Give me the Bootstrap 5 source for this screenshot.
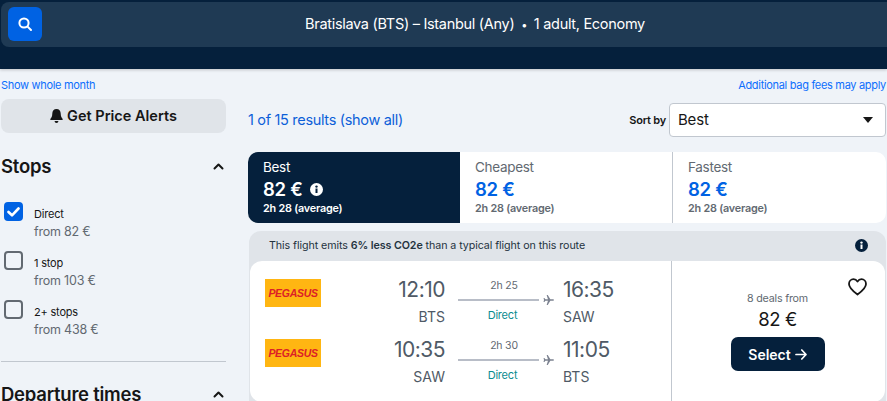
<!DOCTYPE html>
<html lang="en">
<head>
<meta charset="utf-8">
<title>Flights</title>
<link href="https://cdn.jsdelivr.net/npm/bootstrap@5.3.0/dist/css/bootstrap.min.css" rel="stylesheet">
<style>
html,body{height:401px;overflow:hidden}
body{background:#eff3f8;font-family:Inter,"Noto Sans",sans-serif;color:#161616;letter-spacing:-.2px}
.top-band{background:#05203c;height:69px;padding:2px 0 0 1px;box-shadow:0 1px 3px rgba(0,0,0,.2)}
.sum-bar{background:#1f3a54;height:45px;border-radius:8px 0 0 8px;padding:5px 7px;color:#fff;font-size:14.5px;position:relative}
.sum-text{flex:1;text-align:center;margin-top:-1px;padding-left:28px;letter-spacing:-.3px}
.sum-text i{font-style:normal;margin:0 3px;font-size:11px}
.srch{width:34px;height:34px;background:#0062e3;border-radius:6px}
.tiny-links{height:30px;font-size:11px;padding:2px 1px 0;align-items:center;letter-spacing:-.31px}
.tiny-links a{color:#0d6efd;text-decoration:none}
.page-flex{display:flex;padding:0 1px}
.side{width:225px;flex:none}
.main-col{margin-left:22px;flex:1;min-width:0}
.alert-btn{background:#e0e4e9;height:34px;border-radius:8px;font-size:14.5px;font-weight:600;color:#161616;width:100%;border:0}
.f-head{font-size:18.5px;font-weight:600;line-height:24px;letter-spacing:-.25px}
.head-first{margin-top:21px}
.head-next{margin-top:20px}
.chev{margin-right:2px}
.stops-list{margin-top:24px}
.stop-row{display:flex;height:49px}
.cb-box{width:19px;height:19px;border:2px solid #626971;border-radius:4px;margin:0 11px 0 3px;flex:none;display:flex;align-items:center;justify-content:center}
.cb-box.on{background:#0062e3;border-color:#0062e3}
.stop-a{font-size:11px;line-height:14px;margin-top:5px}
.stop-b{font-size:12.5px;color:#626971;line-height:20px;margin-top:1px}
.divline{border-top:1px solid #c1c7cf;margin-top:12px}
.res-count{color:#0d5fd8;font-size:14.5px;letter-spacing:-.32px}
.sort-lab{font-size:11px;font-weight:600;margin-right:3px}
.sort-box{width:217px;height:34px;background:#fff;border:1px solid #c1c7cf;border-radius:4px;padding:0 8px;font-size:15px}
.caret-dn{width:0;height:0;border-left:5px solid transparent;border-right:5px solid transparent;border-top:6px solid #161616;margin-right:4px}
.tabs-row{display:flex;height:71px;margin-top:15px;background:#fff;border-radius:10px;overflow:hidden}
.tab-cell{width:212px;padding:7px 15px;color:#626971;line-height:1}
.tab-cell+.tab-cell+.tab-cell{border-left:1px solid #c1c7cf;flex:1}
.tab-cell.sel{background:#05203c;color:#fff}
.t-name{font-size:13.5px;line-height:17px;letter-spacing:-.3px}
.t-price{font-size:18.5px;font-weight:600;color:#0062e3;line-height:24px;margin-top:1px;letter-spacing:-.3px}
.sel .t-price{color:#fff}
.t-sub{font-size:10.8px;font-weight:600;line-height:14px;margin-top:1px}
.result{margin:8px 0 0 1px;background:#e0e4e9;border-radius:12px 12px 0 0;padding-top:30px;position:relative}
.eco-line{position:absolute;left:20px;top:8px;font-size:10.7px;line-height:14px;color:#24333f;letter-spacing:-.08px}
.eco-i{position:absolute;right:18px;top:8px}
.flight-card{background:#fff;border-radius:12px;margin:0 1px;display:flex;height:141px}
.legs{width:422px;border-right:1px solid #c1c7cf;padding:17px 0 0 15px}
.leg{display:flex;height:60px}
.air-logo{width:56px;height:28px;margin-top:1px;background:#ffb612;color:#dc2027;font:italic 700 10.5px/28px "Liberation Sans",sans-serif;text-align:center;letter-spacing:-.3px;flex:none}
.tm{width:124px;text-align:right;color:#4f5a66;flex:none}
.tm2{width:70px;text-align:left;color:#4f5a66;flex:none}
.clock{font-size:21px;line-height:24px;letter-spacing:-.5px}
.ap{font-size:14px;line-height:20px;margin-top:5px;letter-spacing:0}
.mid-sec{width:96px;margin:1px 9px 0 13px;font-size:10.5px;line-height:14px;flex:none;color:#626971}
.mid-lab{width:92px;text-align:center}
.mid-line{display:flex;align-items:center;height:12px;margin:1px 0 2px}
.mid-line b{display:block;width:81px;height:2px;background:#b8bdc7;flex:none}
.direct{color:#0b8c8f;font-size:11px;padding-right:3px}
.buy{flex:1;text-align:center;padding:31px 2px 0 0;position:relative}
.deals{font-size:10.7px;line-height:14px;color:#626971}
.amt{font-size:18.5px;line-height:26px;letter-spacing:-.4px}
.sel-btn{background:#05203c;color:#fff;font-size:14px;font-weight:600;width:94px;height:34px;border-radius:7px;border:0;margin-top:5px;padding:0}
.heart{position:absolute;right:18px;top:17px}
</style>
</head>
<body>
<div class="top-band">
  <div class="sum-bar d-flex">
    <div class="srch d-flex align-items-center justify-content-center">
      <svg width="16" height="16" viewBox="0 0 16 16" fill="none" stroke="#fff" stroke-width="2" stroke-linecap="round"><circle cx="7" cy="7" r="4.600"/><path d="M10.600 10.600 14 14"/></svg>
    </div>
    <div class="sum-text align-self-center">Bratislava (BTS) – Istanbul (Any) <i>•</i> 1 adult, Economy</div>
  </div>
</div>
<div class="tiny-links d-flex justify-content-between">
  <a href="#">Show whole month</a>
  <a href="#">Additional bag fees may apply</a>
</div>
<div class="page-flex">
  <aside class="side">
    <button class="alert-btn d-flex align-items-center justify-content-center gap-1" type="button">
      <svg width="13" height="14" viewBox="0 0 13 14" fill="#161616"><path d="M6.500 0C3.900 0 2.300 2 2.300 4.600c0 3-1 4.200-2 5.400-.3.4 0 .9.5.9h11.400c.5 0 .8-.5.5-.9-1-1.200-2-2.400-2-5.400C10.700 2 9.100 0 6.500 0zM4.600 12h3.800c0 1-.8 2-1.900 2s-1.900-1-1.900-2z"/></svg>
      Get Price Alerts
    </button>
    <div class="d-flex justify-content-between align-items-center f-head head-first">
      <span>Stops</span>
      <svg class="chev" width="11" height="7" viewBox="0 0 11 7" fill="none" stroke="#161616" stroke-width="2" stroke-linecap="round" stroke-linejoin="round"><path d="M1.500 5.500 5.500 1.500l4 4"/></svg>
    </div>
    <div class="stops-list">
      <div class="stop-row">
        <span class="cb-box on"><svg width="13" height="10" viewBox="0 0 13 10" fill="none" stroke="#fff" stroke-width="2.600" stroke-linecap="round" stroke-linejoin="round"><path d="M1.500 5 5 8.300 11.500 1.500"/></svg></span>
        <div><div class="stop-a">Direct</div><div class="stop-b">from 82 €</div></div>
      </div>
      <div class="stop-row">
        <span class="cb-box"></span>
        <div><div class="stop-a">1 stop</div><div class="stop-b">from 103 €</div></div>
      </div>
      <div class="stop-row">
        <span class="cb-box"></span>
        <div><div class="stop-a">2+ stops</div><div class="stop-b">from 438 €</div></div>
      </div>
    </div>
    <div class="divline"></div>
    <div class="d-flex justify-content-between align-items-center f-head head-next">
      <span>Departure times</span>
      <svg class="chev" width="11" height="7" viewBox="0 0 11 7" fill="none" stroke="#161616" stroke-width="2" stroke-linecap="round" stroke-linejoin="round"><path d="M1.500 5.500 5.500 1.500l4 4"/></svg>
    </div>
  </aside>
  <main class="main-col">
    <div class="d-flex align-items-center justify-content-between mt-1">
      <span class="res-count">1 of 15 results (show all)</span>
      <div class="d-flex align-items-center">
        <span class="sort-lab">Sort by</span>
        <div class="sort-box d-flex align-items-center justify-content-between"><span>Best</span><span class="caret-dn"></span></div>
      </div>
    </div>
    <div class="tabs-row">
      <div class="tab-cell sel">
        <div class="t-name">Best</div>
        <div class="t-price d-flex align-items-center">82 €
          <svg class="ms-2" width="13" height="13" viewBox="0 0 13 13"><circle cx="6.500" cy="6.500" r="6.500" fill="#fff"/><rect x="5.500" y="5.500" width="2" height="4.500" fill="#05203c"/><circle cx="6.500" cy="3.600" r="1.200" fill="#05203c"/></svg>
        </div>
        <div class="t-sub">2h 28 (average)</div>
      </div>
      <div class="tab-cell">
        <div class="t-name">Cheapest</div>
        <div class="t-price">82 €</div>
        <div class="t-sub">2h 28 (average)</div>
      </div>
      <div class="tab-cell">
        <div class="t-name">Fastest</div>
        <div class="t-price">82 €</div>
        <div class="t-sub">2h 28 (average)</div>
      </div>
    </div>
    <div class="result">
      <div class="eco-line">This flight emits <b class="fw-semibold">6% less CO2e</b> than a typical flight on this route</div>
      <svg class="eco-i" width="13" height="13" viewBox="0 0 13 13"><circle cx="6.500" cy="6.500" r="6.500" fill="#05203c"/><rect x="5.500" y="5.500" width="2" height="4.500" fill="#fff"/><circle cx="6.500" cy="3.600" r="1.200" fill="#fff"/></svg>
      <div class="flight-card">
        <div class="legs">
          <div class="leg">
            <div class="air-logo">PEGASUS</div>
            <div class="tm"><div class="clock">12:10</div><div class="ap">BTS</div></div>
            <div class="mid-sec">
              <div class="mid-lab">2h 25</div>
              <div class="mid-line"><b></b><svg class="ms-1" width="12" height="12" viewBox="0 0 12 12" fill="#7c8290"><path d="M12 6c0-.5-.6-.9-1.300-.9H8L5.200.5H4l1.400 4.600H2.600L1.500 3.700H.6L1.100 6 .6 8.300h.9l1.100-1.400h2.800L4 11.500h1.200L8 6.900h2.700c.7 0 1.300-.4 1.300-.9z"/></svg></div>
              <div class="mid-lab direct">Direct</div>
            </div>
            <div class="tm2"><div class="clock">16:35</div><div class="ap">SAW</div></div>
          </div>
          <div class="leg">
            <div class="air-logo">PEGASUS</div>
            <div class="tm"><div class="clock">10:35</div><div class="ap">SAW</div></div>
            <div class="mid-sec">
              <div class="mid-lab">2h 30</div>
              <div class="mid-line"><b></b><svg class="ms-1" width="12" height="12" viewBox="0 0 12 12" fill="#7c8290"><path d="M12 6c0-.5-.6-.9-1.300-.9H8L5.200.5H4l1.400 4.600H2.600L1.500 3.700H.6L1.100 6 .6 8.300h.9l1.100-1.400h2.800L4 11.500h1.200L8 6.900h2.700c.7 0 1.300-.4 1.300-.9z"/></svg></div>
              <div class="mid-lab direct">Direct</div>
            </div>
            <div class="tm2"><div class="clock">11:05</div><div class="ap">BTS</div></div>
          </div>
        </div>
        <div class="buy">
          <svg class="heart" width="19" height="18" viewBox="0 0 19 18" fill="none" stroke="#161616" stroke-width="1.800" stroke-linejoin="round"><path d="M9.500 16.500C4 12.500 1 9.800 1 6c0-2.700 2-4.800 4.500-4.800 1.700 0 3.100.9 4 2.400.9-1.500 2.300-2.400 4-2.400C16 1.200 18 3.300 18 6c0 3.800-3 6.500-8.500 10.500z"/></svg>
          <div class="deals">8 deals from</div>
          <div class="amt">82 €</div>
          <button class="sel-btn d-inline-flex align-items-center justify-content-center gap-1" type="button">Select
            <svg width="12" height="11" viewBox="0 0 12 11" fill="none" stroke="#fff" stroke-width="1.700" stroke-linecap="round" stroke-linejoin="round"><path d="M1 5.500h10M6.800 1 11 5.500 6.800 10"/></svg>
          </button>
        </div>
      </div>
    </div>
  </main>
</div>
<script src="https://cdn.jsdelivr.net/npm/bootstrap@5.3.0/dist/js/bootstrap.bundle.min.js"></script>
</body>
</html>
